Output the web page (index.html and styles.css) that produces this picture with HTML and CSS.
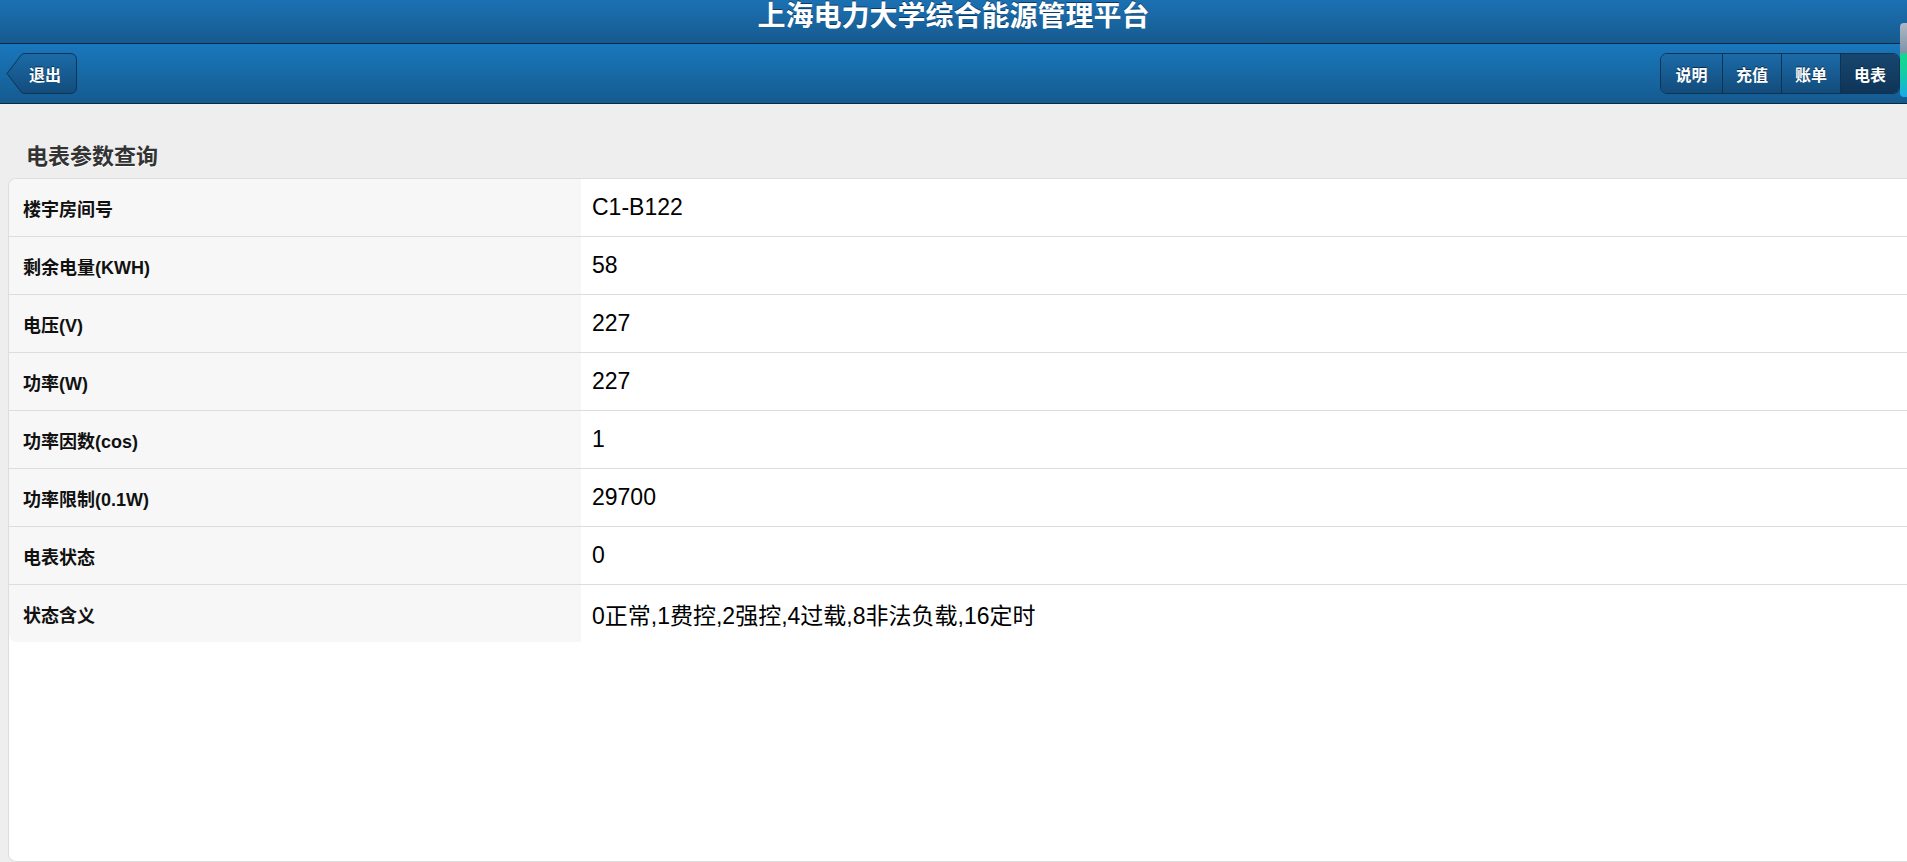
FILE: index.html
```html
<!DOCTYPE html>
<html lang="zh-CN">
<head>
<meta charset="utf-8">
<title>上海电力大学综合能源管理平台</title>
<link rel="stylesheet" href="styles.css">
</head>
<body>
<div class="app">
  <header class="topbar">
    <h1 class="app-title">上海电力大学综合能源管理平台</h1>
  </header>
  <nav class="navbar">
    <a class="back-btn" href="#">
      <svg class="back-shape" width="71" height="41" viewBox="0 0 71 41">
        <defs>
          <linearGradient id="bg" x1="0" y1="0" x2="0" y2="1">
            <stop offset="0" stop-color="#1b6ba8"/>
            <stop offset="1" stop-color="#134c7b"/>
          </linearGradient>
        </defs>
        <path d="M1 20.5 L15.2 2 Q16.5 0.5 19 0.5 H64 Q70.5 0.5 70.5 7 V34 Q70.5 40.5 64 40.5 H19 Q16.5 40.5 15.2 39 Z" fill="url(#bg)" stroke="#0c3456" stroke-width="1"/>
      </svg>
      <span class="back-text">退出</span>
    </a>
    <div class="tabs">
      <a class="tab" href="#">说明</a>
      <a class="tab" href="#">充值</a>
      <a class="tab" href="#">账单</a>
      <a class="tab active" href="#">电表</a>
    </div>
  </nav>
  <main class="content">
    <h2 class="section-title">电表参数查询</h2>
    <div class="param-table">
      <div class="row"><div class="label">楼宇房间号</div><div class="value">C1-B122</div></div>
      <div class="row"><div class="label">剩余电量(KWH)</div><div class="value">58</div></div>
      <div class="row"><div class="label">电压(V)</div><div class="value">227</div></div>
      <div class="row"><div class="label">功率(W)</div><div class="value">227</div></div>
      <div class="row"><div class="label">功率因数(cos)</div><div class="value">1</div></div>
      <div class="row"><div class="label">功率限制(0.1W)</div><div class="value">29700</div></div>
      <div class="row"><div class="label">电表状态</div><div class="value">0</div></div>
      <div class="row"><div class="label">状态含义</div><div class="value">0正常,1费控,2强控,4过载,8非法负载,16定时</div></div>
    </div>
  </main>
  <div class="scroll-indicator"></div>
</div>
</body>
</html>
```
FILE: styles.css
```css
html, body {
  margin: 0;
  padding: 0;
  height: 100%;
  overflow: hidden;
}
body {
  font-family: "Liberation Sans", "Noto Sans CJK SC", sans-serif;
  background: #eeeeee;
}
a { text-decoration: none; }

.app {
  position: relative;
  height: 862px;
  display: flex;
  flex-direction: column;
}

.topbar {
  height: 43px;
  background: linear-gradient(#1b71b3, #165a8f);
  border-bottom: 1px solid #0b2844;
  display: flex;
  justify-content: center;
  align-items: flex-start;
}
.app-title {
  margin: 0;
  font-size: 28px;
  line-height: 33px;
  font-weight: bold;
  color: #ffffff;
  text-shadow: 0 -1px 0 #0c3a63;
}

.navbar {
  height: 50px;
  background: linear-gradient(#1978bd, #155a8f);
  border-bottom: 1px solid #0b2844;
  display: flex;
  justify-content: space-between;
  align-items: flex-start;
  padding: 9px 7px 0 6px;
}

.back-btn {
  position: relative;
  width: 71px;
  height: 41px;
  display: flex;
  align-items: center;
}
.back-shape {
  position: absolute;
  left: 0;
  top: 0;
}
.back-text {
  position: relative;
  padding-left: 23px;
  font-size: 16px;
  font-weight: bold;
  color: #ffffff;
  text-shadow: 0 -1px 0 #0a2c4a;
}

.tabs {
  display: flex;
  height: 39px;
  border: 1px solid #0d3352;
  border-radius: 7px;
  overflow: hidden;
}
.tab {
  width: 58px;
  display: flex;
  align-items: center;
  justify-content: center;
  border-left: 1px solid #0d3352;
  background: linear-gradient(#1b6ba8, #134c7b);
  font-size: 16px;
  font-weight: bold;
  color: #ffffff;
  text-shadow: 0 -1px 0 #0a2c4a;
}
.tab:first-child {
  width: 61px;
  border-left: none;
}
.tab.active {
  background: linear-gradient(#17466f, #0f3558);
}

.content {
  flex: 1;
  display: flex;
  flex-direction: column;
  min-height: 0;
}
.section-title {
  margin: 0;
  padding: 40px 0 0 26px;
  font-size: 22px;
  line-height: 26px;
  font-weight: bold;
  color: #333333;
  text-shadow: 0 1px 0 #ffffff;
}

.param-table {
  flex: 1;
  margin: 8px 0 0 8px;
  background: #ffffff;
  border: 1px solid #dddddd;
  border-right: none;
  border-radius: 8px 0 0 8px;
  overflow: hidden;
}
.row {
  display: flex;
  height: 57px;
  border-bottom: 1px solid #dddddd;
}
.row:last-child {
  border-bottom: none;
}
.label {
  width: 558px;
  padding-left: 14px;
  display: flex;
  align-items: center;
  background: #f7f7f7;
  font-size: 18px;
  font-weight: bold;
  color: #111111;
}
.row:last-child .label {
  border-bottom-left-radius: 8px;
}
.value {
  flex: 1;
  padding-left: 11px;
  display: flex;
  align-items: center;
  font-size: 23px;
  color: #000000;
}

.scroll-indicator {
  position: absolute;
  right: 0;
  top: 23px;
  width: 7px;
  height: 74px;
  border-radius: 4px 0 0 4px;
  background: linear-gradient(#aeb8c4 0%, #7f93a8 40%, #12d98c 42%, #14cfa0 65%, #19a9e6 100%);
}
```
